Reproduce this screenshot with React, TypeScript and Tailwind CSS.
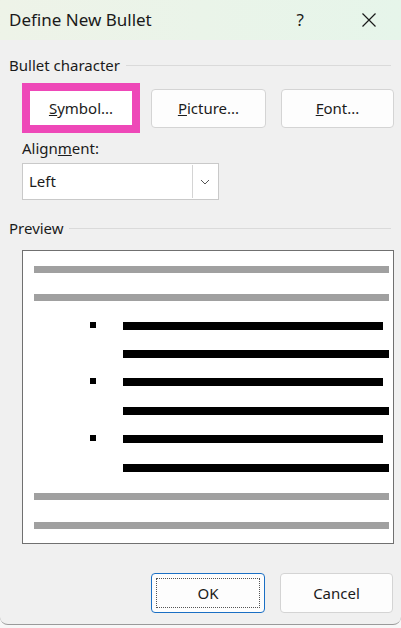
const font = { fontFamily: '"Noto Sans", "Open Sans", sans-serif' };

function PreviewLine({ kind, bullet, short }: { kind: 'gray' | 'black'; bullet?: boolean; short?: boolean }) {
    if (kind === 'gray') {
        return <div className="h-[7px] ml-[11px] mr-[4px] bg-[#a0a0a0]" />;
    }
    return (
        <div className="relative h-[7px]">
            {bullet && <div className="absolute left-[67px] top-0 w-[6px] h-[6px] bg-black" />}
            <div className={`h-[8px] ml-[100px] bg-black ${short ? 'mr-[10px]' : 'mr-[4px]'}`} />
        </div>
    );
}

function DialogButton({ children, className = '' }: { children: React.ReactNode; className?: string }) {
    return (
        <button
            className={`h-[39px] rounded-[4px] bg-[#fdfdfd] border border-[#d4d4d4] text-[15px] text-[#1b1b1b] flex items-center justify-center ${className}`}
        >
            {children}
        </button>
    );
}

export default function App() {
    return (
        <div className="w-[401px] h-[628px] overflow-hidden bg-[#f7f7f7]" style={font}>
            <div className="h-[625px] bg-[#f0f0f0] rounded-b-[8px] border-b border-[#9a9a9a] flex flex-col">
                {/* title bar */}
                <div className="h-[40px] flex items-center bg-gradient-to-r from-[#eef3e8] to-[#e6f5ea]">
                    <span className="ml-[9px] text-[17px] text-[#1a1a1a]">Define New Bullet</span>
                    <span className="ml-auto text-[17px] text-[#1a1a1a] mr-[57px]">?</span>
                    <svg width="16" height="16" viewBox="0 0 16 16" className="mr-[24px]">
                        <path d="M1.5 1.5 L14.5 14.5 M14.5 1.5 L1.5 14.5" stroke="#1a1a1a" strokeWidth="1.2" />
                    </svg>
                </div>

                {/* bullet character */}
                <div className="mt-[14px] flex items-center pl-[9px] pr-[10px] h-[22px]">
                    <span className="text-[15px] text-[#1b1b1b]">Bullet character</span>
                    <div className="flex-1 h-px bg-[#dadada] ml-[6px]" />
                </div>
                <div className="mt-[7px] flex items-center pl-[22px]">
                    <div className="w-[118px] h-[50px] border-[8px] border-[#ee48b8] bg-white flex items-center justify-center text-[15px] text-[#1b1b1b]">
                        <span><u>S</u>ymbol...</span>
                    </div>
                    <DialogButton className="ml-[11px] w-[115px]">
                        <span><u>P</u>icture...</span>
                    </DialogButton>
                    <DialogButton className="ml-[15px] w-[113px]">
                        <span><u>F</u>ont...</span>
                    </DialogButton>
                </div>

                {/* alignment */}
                <div className="mt-[4px] pl-[22px] h-[22px] flex items-center text-[15px] text-[#1b1b1b]">
                    <span>Align<u>m</u>ent:</span>
                </div>
                <div className="mt-[4px] ml-[22px] w-[197px] h-[37px] bg-white border border-[#c9c9c9] flex items-center">
                    <span className="ml-[6px] text-[15px] text-[#1b1b1b]">Left</span>
                    <div className="ml-auto mr-[1px] w-[25px] h-[33px] border-l border-[#d4d4d4] flex items-center justify-center">
                        <svg width="10" height="6" viewBox="0 0 10 6">
                            <path d="M1 1 L5 5 L9 1" fill="none" stroke="#555" strokeWidth="1" />
                        </svg>
                    </div>
                </div>

                {/* preview */}
                <div className="mt-[17px] flex items-center pl-[9px] pr-[10px] h-[22px]">
                    <span className="text-[15px] text-[#1b1b1b]">Preview</span>
                    <div className="flex-1 h-px bg-[#dadada] ml-[5px]" />
                </div>
                <div className="mt-[11px] ml-[22px] w-[372px] h-[294px] bg-white border border-[#707070] pt-[15px] flex flex-col">
                    <PreviewLine kind="gray" />
                    <div className="h-[21px]" />
                    <PreviewLine kind="gray" />
                    <div className="h-[21px]" />
                    <PreviewLine kind="black" bullet short />
                    <div className="h-[21px]" />
                    <PreviewLine kind="black" />
                    <div className="h-[21px]" />
                    <PreviewLine kind="black" bullet short />
                    <div className="h-[22px]" />
                    <PreviewLine kind="black" />
                    <div className="h-[21px]" />
                    <PreviewLine kind="black" bullet short />
                    <div className="h-[22px]" />
                    <PreviewLine kind="black" />
                    <div className="h-[22px]" />
                    <PreviewLine kind="gray" />
                    <div className="h-[22px]" />
                    <PreviewLine kind="gray" />
                </div>

                {/* footer */}
                <div className="mt-[29px] flex items-center">
                    <button className="ml-[151px] w-[114px] h-[40px] rounded-[4px] bg-[#fdfdfd] border border-[#1a6fc4] p-[4px]">
                        <div className="w-full h-full border border-dotted border-[#555] flex items-center justify-center text-[15px] text-[#1b1b1b]">
                            OK
                        </div>
                    </button>
                    <DialogButton className="ml-[15px] w-[113px] h-[40px]">Cancel</DialogButton>
                </div>
            </div>
        </div>
    );
}
